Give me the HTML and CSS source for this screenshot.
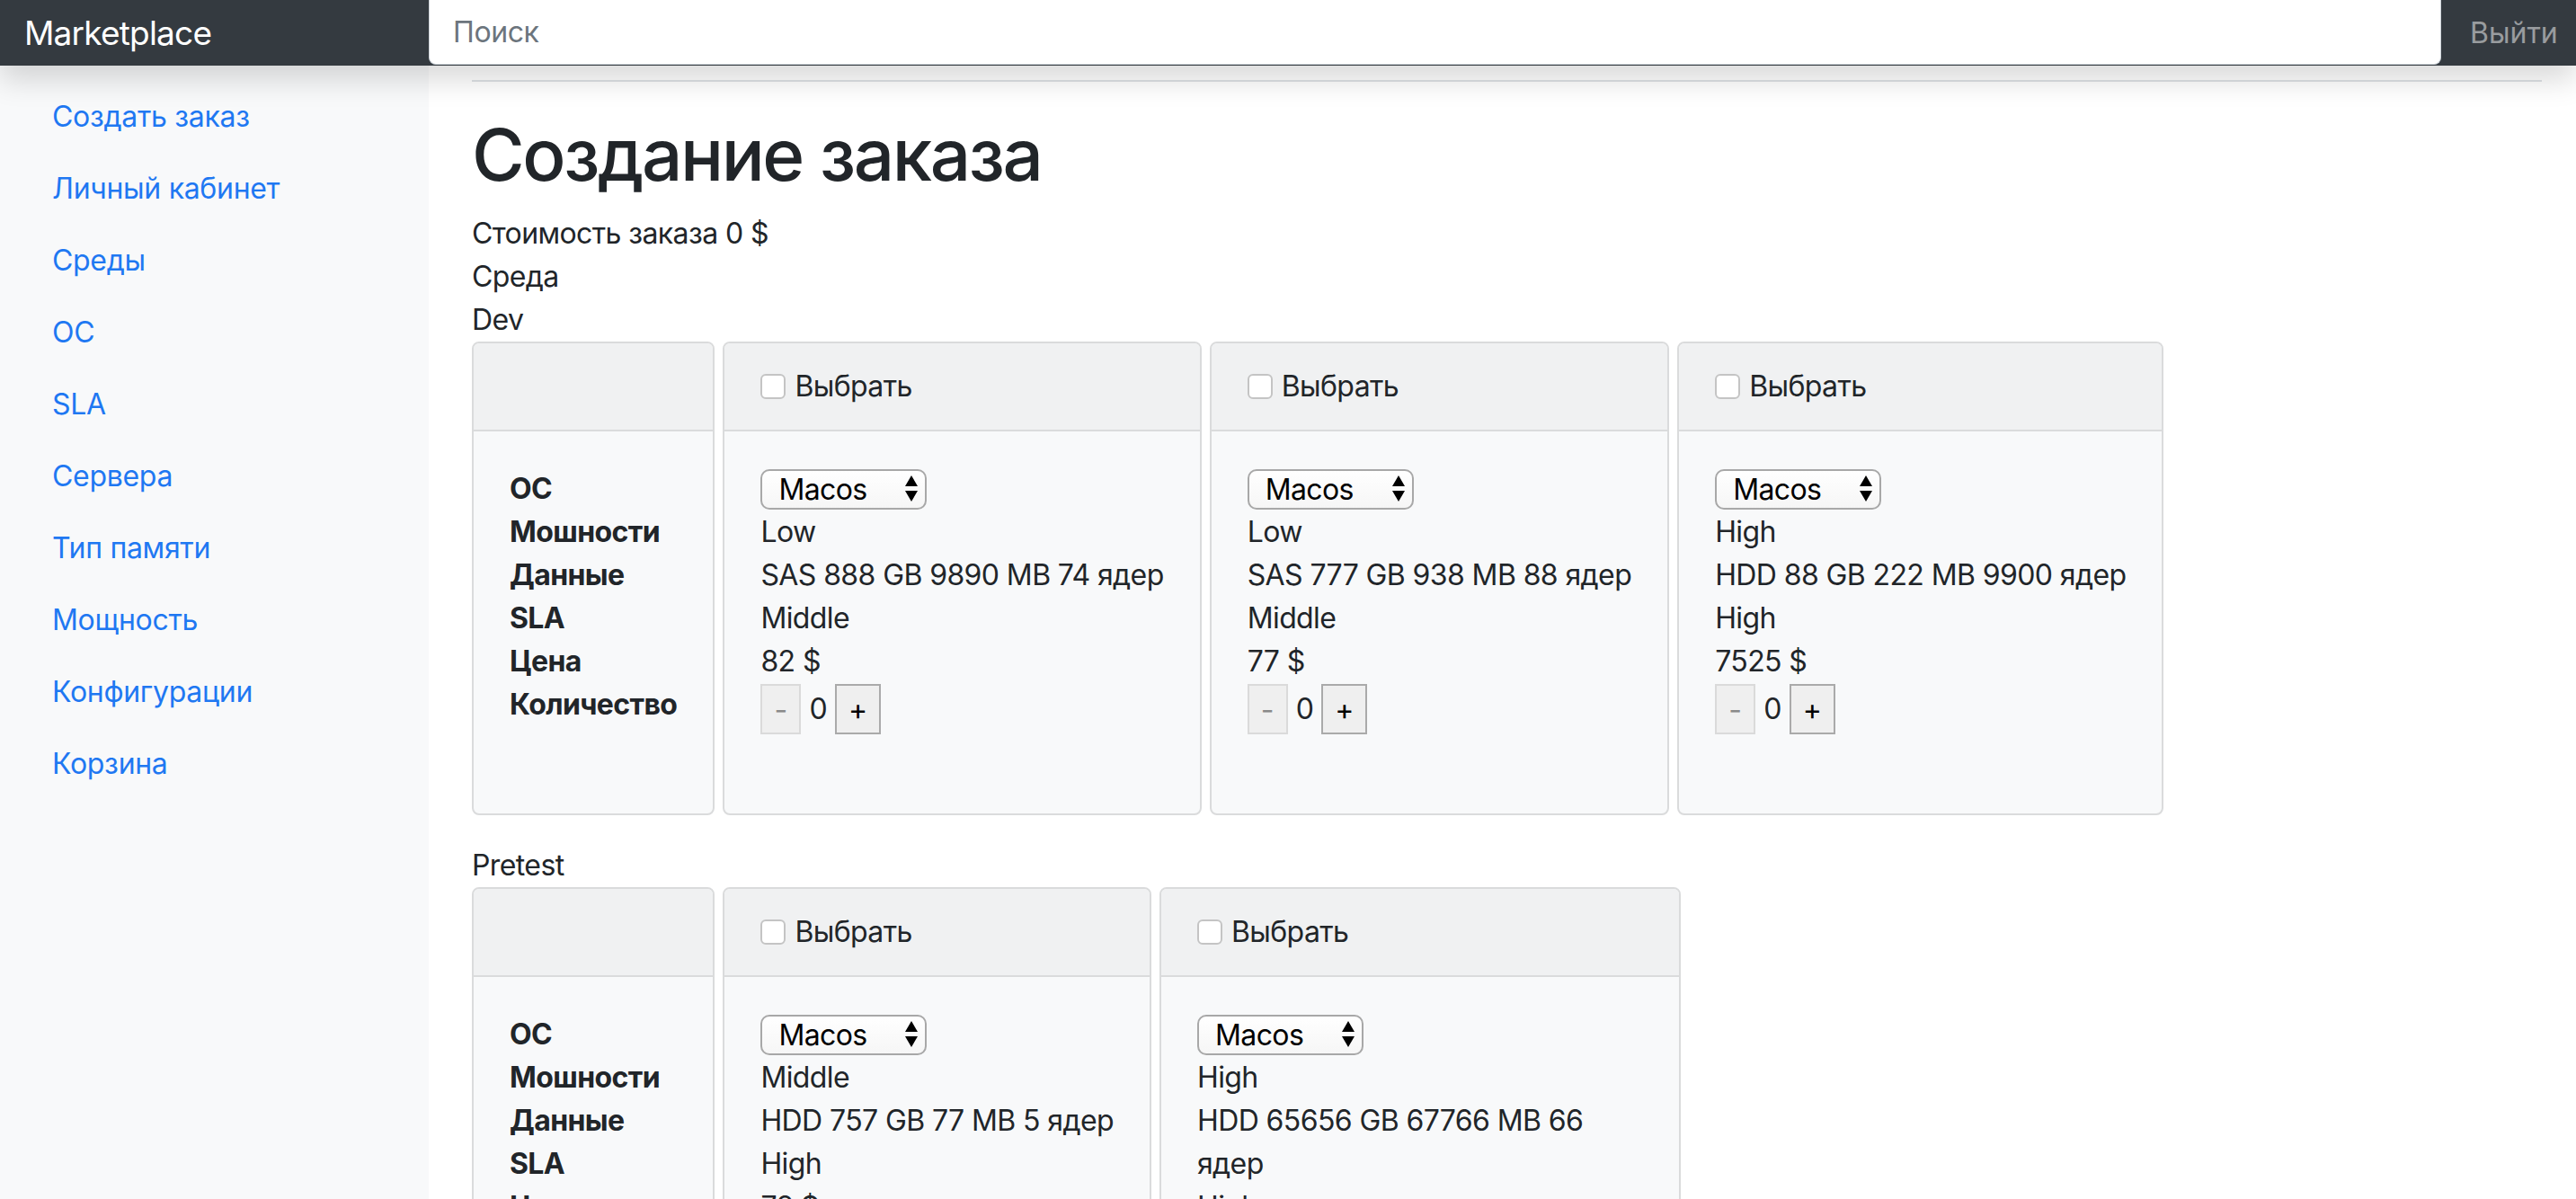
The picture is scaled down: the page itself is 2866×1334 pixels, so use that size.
FILE: index.html
```html
<!DOCTYPE html>
<html lang="ru">
<head>
	<meta charset="utf-8">
	<title>Marketplace</title>
	<link rel="stylesheet" href="styles.css">
</head>
<body>
	<header class="navbar">
		<a class="brand" href="#">Marketplace</a>
		<input class="search" type="text" placeholder="Поиск">
		<a class="logout" href="#">Выйти</a>
	</header>

	<div class="layout">
		<nav class="sidebar">
			<a class="side-link" href="#">Создать заказ</a>
			<a class="side-link" href="#">Личный кабинет</a>
			<a class="side-link" href="#">Среды</a>
			<a class="side-link" href="#">ОС</a>
			<a class="side-link" href="#">SLA</a>
			<a class="side-link" href="#">Сервера</a>
			<a class="side-link" href="#">Тип памяти</a>
			<a class="side-link" href="#">Мощность</a>
			<a class="side-link" href="#">Конфигурации</a>
			<a class="side-link" href="#">Корзина</a>
		</nav>

		<main class="main">
			<div class="page-head"></div>
			<h1>Создание заказа</h1>
			<div class="line">Стоимость заказа 0 $</div>
			<div class="line">Среда</div>

			<!-- Dev -->
			<div class="line">Dev</div>
			<div class="cards">
				<div class="card">
					<div class="card-header">&nbsp;</div>
					<div class="card-body labels">
						<div>ОС</div>
						<div>Мошности</div>
						<div>Данные</div>
						<div>SLA</div>
						<div>Цена</div>
						<div>Количество</div>
					</div>
				</div>

				<div class="card">
					<div class="card-header"><label><input type="checkbox" class="pick">Выбрать</label></div>
					<div class="card-body">
						<div class="os-select"><select><option>Macos</option><option>Linux</option><option>Windows</option></select><svg class="arrows" width="16" height="30" viewBox="0 0 16 30"><path d="M8 0 L15 12 L1 12 Z M1 17 L15 17 L8 29 Z" fill="#000"/></svg></div>
						<div>Low</div>
						<div>SAS 888 GB 9890 MB 74 ядер</div>
						<div>Middle</div>
						<div>82 $</div>
						<div class="counter"><button class="minus" disabled>-</button><span>0</span><button class="plus">+</button></div>
						<div class="spacer"></div>
					</div>
				</div>

				<div class="card">
					<div class="card-header"><label><input type="checkbox" class="pick">Выбрать</label></div>
					<div class="card-body">
						<div class="os-select"><select><option>Macos</option><option>Linux</option><option>Windows</option></select><svg class="arrows" width="16" height="30" viewBox="0 0 16 30"><path d="M8 0 L15 12 L1 12 Z M1 17 L15 17 L8 29 Z" fill="#000"/></svg></div>
						<div>Low</div>
						<div>SAS 777 GB 938 MB 88 ядер</div>
						<div>Middle</div>
						<div>77 $</div>
						<div class="counter"><button class="minus" disabled>-</button><span>0</span><button class="plus">+</button></div>
						<div class="spacer"></div>
					</div>
				</div>

				<div class="card">
					<div class="card-header"><label><input type="checkbox" class="pick">Выбрать</label></div>
					<div class="card-body">
						<div class="os-select"><select><option>Macos</option><option>Linux</option><option>Windows</option></select><svg class="arrows" width="16" height="30" viewBox="0 0 16 30"><path d="M8 0 L15 12 L1 12 Z M1 17 L15 17 L8 29 Z" fill="#000"/></svg></div>
						<div>High</div>
						<div>HDD 88 GB 222 MB 9900 ядер</div>
						<div>High</div>
						<div>7525 $</div>
						<div class="counter"><button class="minus" disabled>-</button><span>0</span><button class="plus">+</button></div>
						<div class="spacer"></div>
					</div>
				</div>
			</div>

			<!-- Pretest -->
			<div class="line">Pretest</div>
			<div class="cards">
				<div class="card">
					<div class="card-header">&nbsp;</div>
					<div class="card-body labels">
						<div>ОС</div>
						<div>Мошности</div>
						<div>Данные</div>
						<div>SLA</div>
						<div>Цена</div>
						<div>Количество</div>
					</div>
				</div>

				<div class="card">
					<div class="card-header"><label><input type="checkbox" class="pick">Выбрать</label></div>
					<div class="card-body">
						<div class="os-select"><select><option>Macos</option><option>Linux</option><option>Windows</option></select><svg class="arrows" width="16" height="30" viewBox="0 0 16 30"><path d="M8 0 L15 12 L1 12 Z M1 17 L15 17 L8 29 Z" fill="#000"/></svg></div>
						<div>Middle</div>
						<div>HDD 757 GB 77 MB 5 ядер</div>
						<div>High</div>
						<div>78 $</div>
						<div class="counter"><button class="minus" disabled>-</button><span>0</span><button class="plus">+</button></div>
						<div class="spacer"></div>
					</div>
				</div>

				<div class="card">
					<div class="card-header"><label><input type="checkbox" class="pick">Выбрать</label></div>
					<div class="card-body">
						<div class="os-select"><select><option>Macos</option><option>Linux</option><option>Windows</option></select><svg class="arrows" width="16" height="30" viewBox="0 0 16 30"><path d="M8 0 L15 12 L1 12 Z M1 17 L15 17 L8 29 Z" fill="#000"/></svg></div>
						<div>High</div>
						<div>HDD 65656 GB 67766 MB 66 ядер</div>
						<div>High</div>
						<div>650 $</div>
						<div class="counter"><button class="minus" disabled>-</button><span>0</span><button class="plus">+</button></div>
						<div class="spacer"></div>
					</div>
				</div>
			</div>
		</main>
	</div>
</body>
</html>
```

FILE: styles.css
```css
html, body {
	margin: 0;
	overflow: hidden;
}

body {
	font-family: Inter, "Noto Sans", sans-serif;
	font-size: 32px;
	line-height: 1.5;
	letter-spacing: -0.6px;
	color: #212529;
	background: #fff;
}

/* top bar */
.navbar {
	position: relative;
	z-index: 2;
	display: flex;
	height: 73px;
	background: #343a40;
	box-shadow: 0 16px 32px rgba(0, 0, 0, .15);
}

.brand {
	flex: none;
	width: 450px;
	padding-left: 27px;
	font-size: 37px;
	letter-spacing: -0.8px;
	line-height: 73px;
	color: #fff;
	text-decoration: none;
}

.search {
	flex: 1;
	height: 71px;
	margin: 0;
	padding: 0 26px;
	border: 1px solid #ced4da;
	border-top: none;
	border-radius: 0 0 8px 8px;
	background: #fff;
	font-family: inherit;
	font-size: 32px;
	letter-spacing: -0.4px;
	color: #495057;
	outline: none;
}

.search::placeholder {
	color: #6c757d;
}

.logout {
	flex: none;
	width: 118px;
	padding-left: 32px;
	line-height: 73px;
	letter-spacing: 0;
	color: rgba(255, 255, 255, .5);
	text-decoration: none;
}

/* sidebar + content */
.layout {
	display: flex;
}

.sidebar {
	flex: none;
	width: 477px;
	min-height: calc(100vh - 73px);
	padding-top: 17px;
	background: #f8f9fa;
	display: flex;
	flex-direction: column;
}

.side-link {
	padding: 16px 0 16px 58px;
	letter-spacing: -0.3px;
	color: #1f78f2;
	text-decoration: none;
}

.main {
	flex: 1;
	padding: 0 38px 0 48px;
}

.page-head {
	height: 16px;
	border-bottom: 2px solid #dee2e6;
	margin-bottom: 33px;
}

h1 {
	margin: 0 0 16px;
	font-size: 80px;
	font-weight: 500;
	letter-spacing: -2.4px;
	line-height: 96px;
}

.line {
	line-height: 48px;
}

/* cards */
.cards {
	display: flex;
	gap: 9px;
	margin-bottom: 32px;
}

.card {
	flex: none;
	max-width: 576px;
	border: 2px solid #dadbdc;
	border-radius: 8px;
	background: #f8f9fa;
	overflow: hidden;
}

.card-header {
	padding: 24px 40px;
	background: #f0f1f2;
	border-bottom: 2px solid #dadbdc;
	line-height: 48px;
}

.card-header label {
	display: flex;
	align-items: center;
}

.pick {
	appearance: none;
	-webkit-appearance: none;
	flex: none;
	width: 28px;
	height: 28px;
	margin: 0 10px 0 0;
	border: 2px solid #c4c4c4;
	border-radius: 6px;
	background: #fff;
}

.card-body {
	padding: 40px;
}

.labels {
	font-weight: 700;
}

.os-select {
	position: relative;
	display: flex;
	align-items: center;
	height: 48px;
	width: 185px;
}

.os-select select {
	appearance: none;
	-webkit-appearance: none;
	width: 185px;
	height: 45px;
	margin: 0;
	padding: 0 0 0 18px;
	border: 2px solid #a8a8a8;
	border-radius: 10px;
	background: linear-gradient(#fff, #f6f6f6);
	font-family: inherit;
	font-size: 32px;
	letter-spacing: -0.6px;
	color: #000;
}

.arrows {
	position: absolute;
	right: 9px;
	top: 9px;
	pointer-events: none;
}

.counter {
	display: flex;
	align-items: center;
	gap: 9px;
	height: 56px;
	margin-top: 1px;
}

.counter button {
	height: 56px;
	padding: 0;
	font-family: inherit;
	font-size: 32px;
	background: #efefef;
}

.minus {
	width: 45px;
	border: 2px solid #dadada;
	color: #8a8a8a;
}

.plus {
	width: 51px;
	border: 2px solid #aaa;
	color: #000;
}

.spacer {
	height: 48px;
}
```
